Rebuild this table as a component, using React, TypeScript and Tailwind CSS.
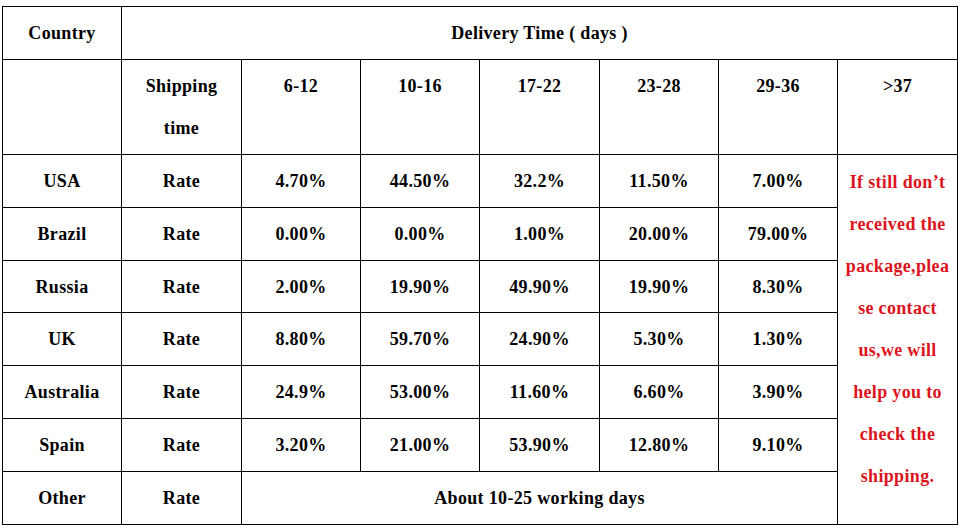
import React from "react";

const rows: [string, string[]][] = [
  ["USA", ["4.70%", "44.50%", "32.2%", "11.50%", "7.00%"]],
  ["Brazil", ["0.00%", "0.00%", "1.00%", "20.00%", "79.00%"]],
  ["Russia", ["2.00%", "19.90%", "49.90%", "19.90%", "8.30%"]],
  ["UK", ["8.80%", "59.70%", "24.90%", "5.30%", "1.30%"]],
  ["Australia", ["24.9%", "53.00%", "11.60%", "6.60%", "3.90%"]],
  ["Spain", ["3.20%", "21.00%", "53.90%", "12.80%", "9.10%"]],
];

const heights = ["h-[53px]", "h-[53px]", "h-[52px]", "h-[53px]", "h-[53px]", "h-[53px]"];

const redLines = [
  "If still don’t",
  "received the",
  "package,plea",
  "se contact",
  "us,we will",
  "help you to",
  "check the",
  "shipping.",
];

const cell = "border border-black text-center align-middle p-0";

export default function App() {
  return (
    <div className="w-[960px] h-[530px] bg-white pt-[6px] pl-[2px] overflow-hidden">
      <table
        className="table-fixed border-collapse w-[955px] text-[18px] font-bold text-black leading-[42px] tracking-[0.33px]"
        style={{ fontFamily: '"Liberation Serif", "Times New Roman", serif' }}
      >
        <colgroup>
          <col className="w-[119px]" />
          <col className="w-[120px]" />
          <col className="w-[119px]" />
          <col className="w-[119px]" />
          <col className="w-[120px]" />
          <col className="w-[119px]" />
          <col className="w-[119px]" />
          <col className="w-[120px]" />
        </colgroup>
        <tbody>
          <tr className="h-[53px]">
            <td className={cell}>Country</td>
            <td className={cell} colSpan={7}>
              Delivery Time ( days )
            </td>
          </tr>
          <tr className="h-[95px]">
            <td className={cell}></td>
            <td className={cell}>
              Shipping
              <br />
              time
            </td>
            {["6-12", "10-16", "17-22", "23-28", "29-36", ">37"].map((t) => (
              <td key={t} className="border border-black text-center align-top p-0 pt-[5px]">
                {t}
              </td>
            ))}
          </tr>
          {rows.map(([country, vals], i) => (
            <tr key={country} className={heights[i]}>
              <td className={cell}>{country}</td>
              <td className={cell}>Rate</td>
              {vals.map((v, j) => (
                <td key={j} className={cell}>
                  {v}
                </td>
              ))}
              {i === 0 && (
                <td
                  rowSpan={7}
                  className="border border-black text-center align-top p-0 pt-[6px] text-[#dc1420]"
                >
                  {redLines.map((l) => (
                    <div key={l}>{l}</div>
                  ))}
                </td>
              )}
            </tr>
          ))}
          <tr className="h-[53px]">
            <td className={cell}>Other</td>
            <td className={cell}>Rate</td>
            <td className={cell} colSpan={5}>
              About 10-25 working days
            </td>
          </tr>
        </tbody>
      </table>
    </div>
  );
}
